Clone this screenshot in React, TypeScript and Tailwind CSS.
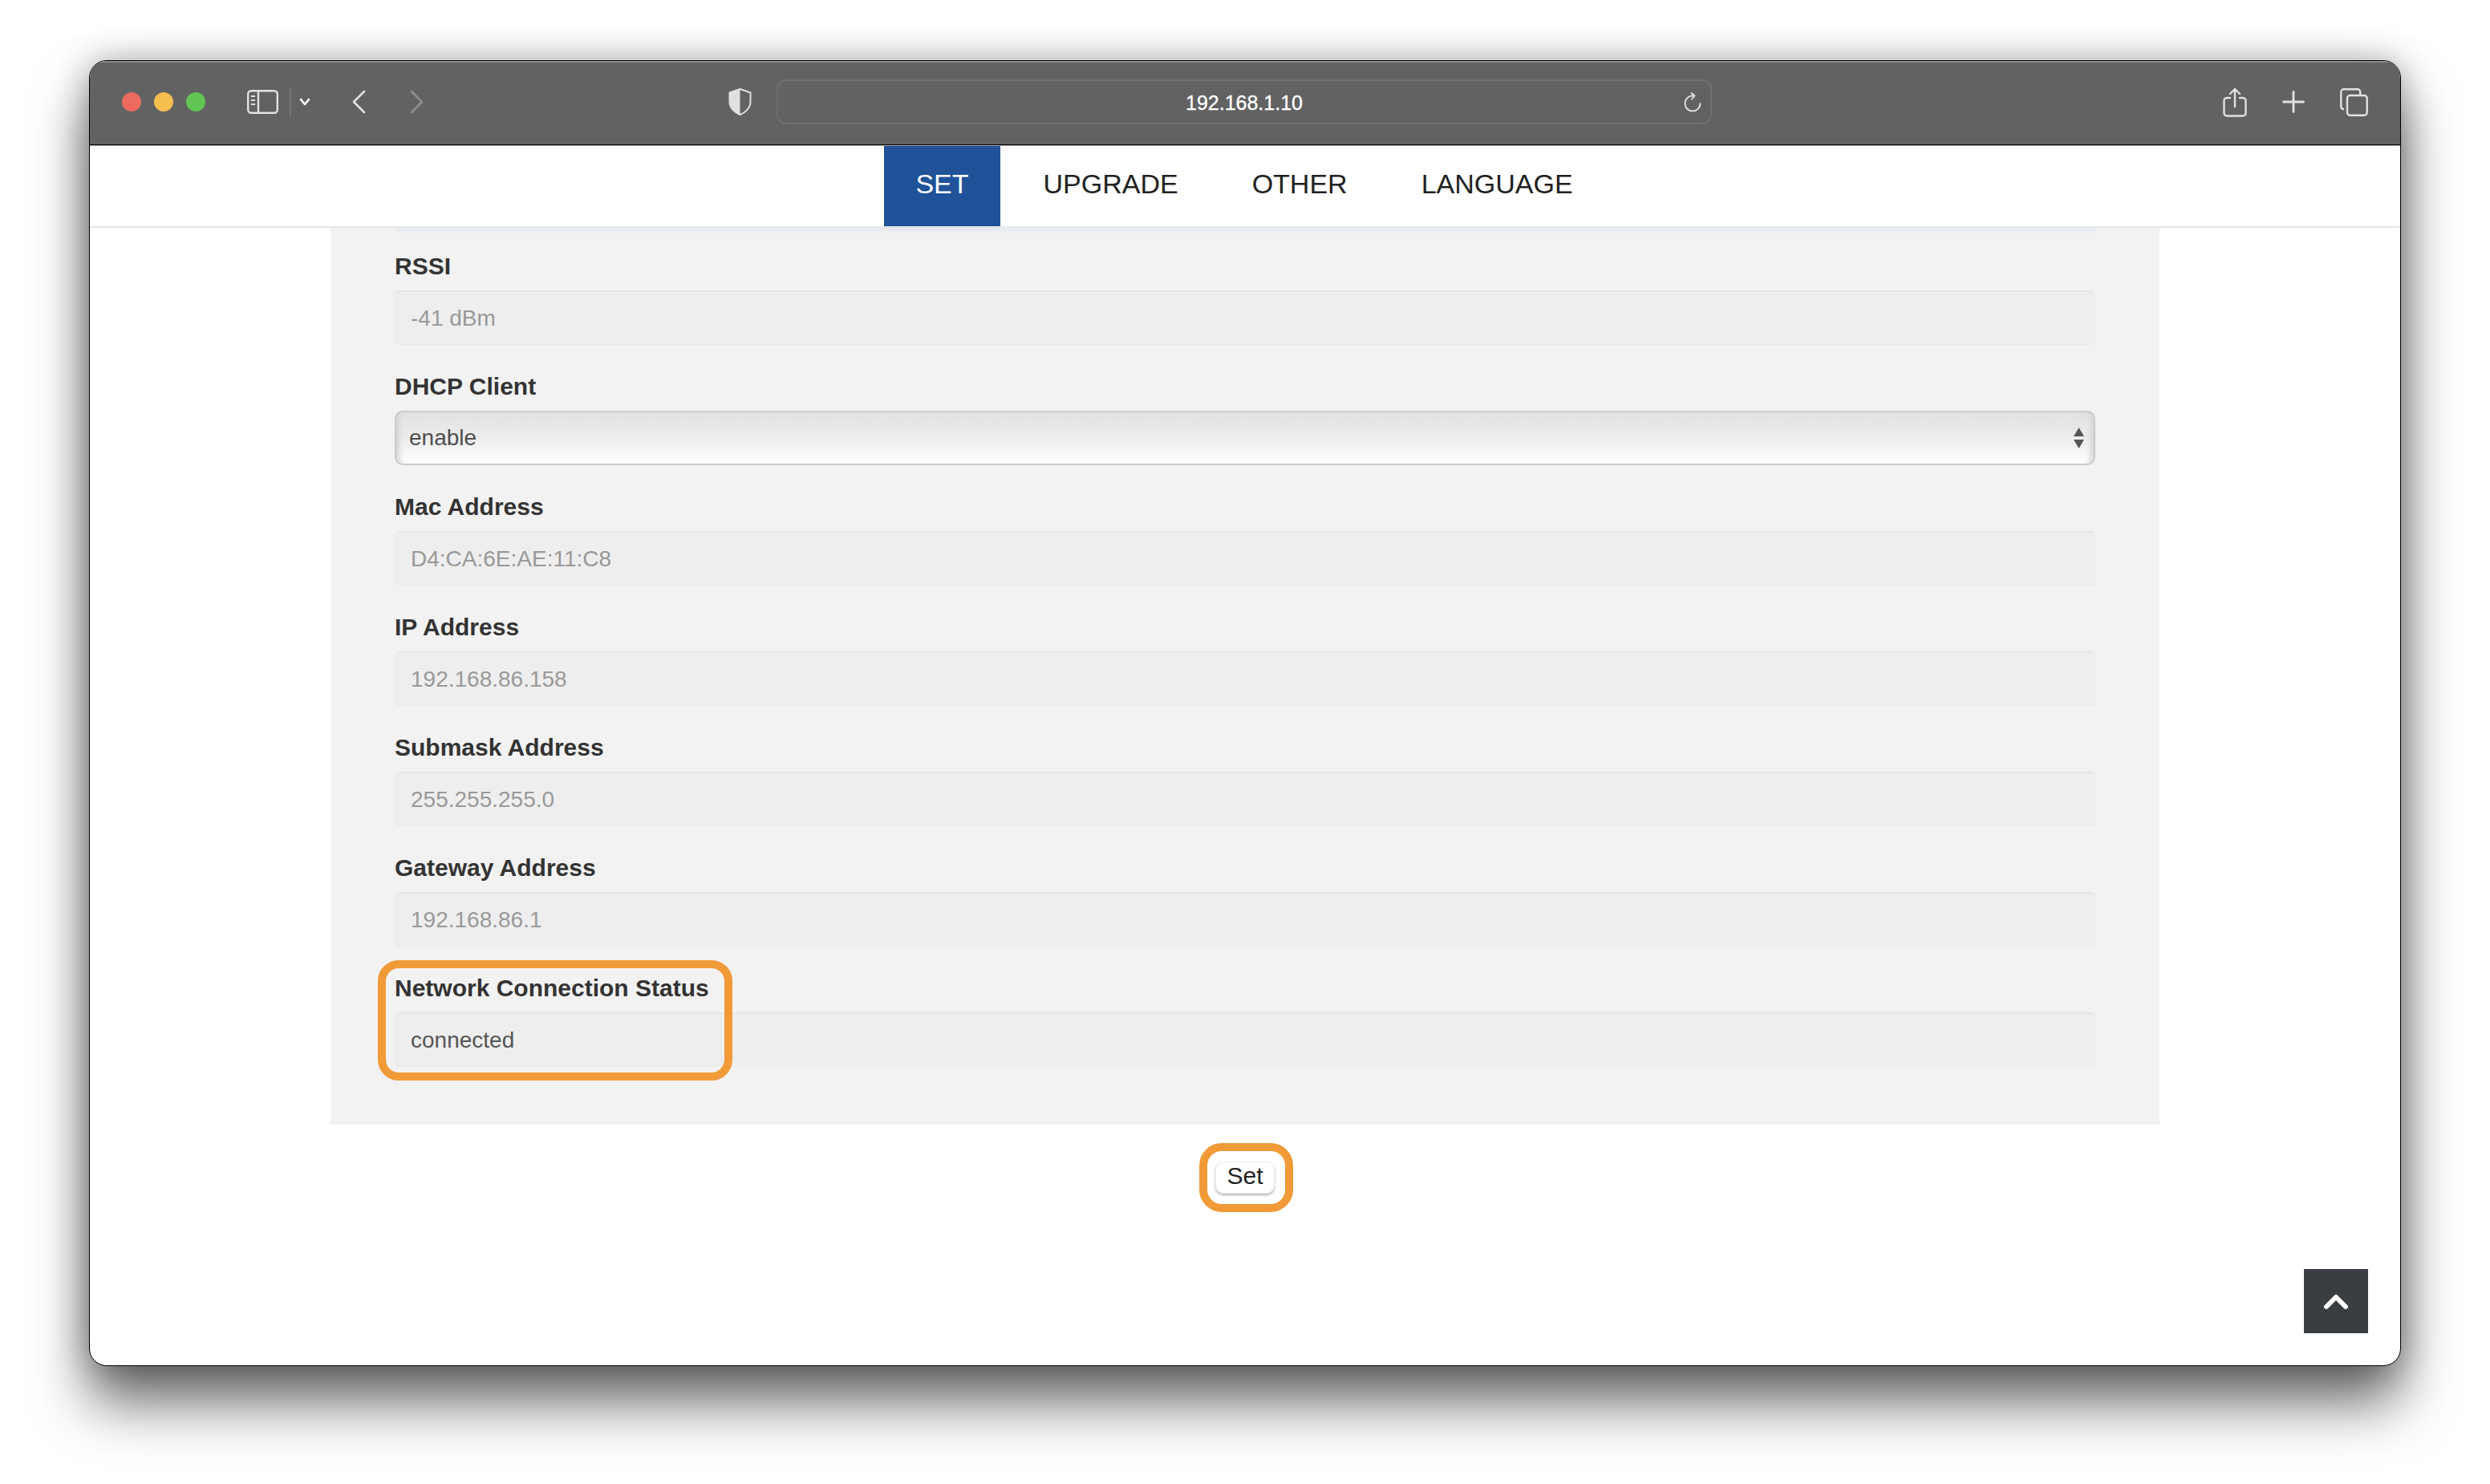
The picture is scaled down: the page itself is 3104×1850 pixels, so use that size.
const fields = [
  { label: 'RSSI', value: '-41 dBm' },
  { label: 'DHCP Client', value: 'enable', select: true },
  { label: 'Mac Address', value: 'D4:CA:6E:AE:11:C8' },
  { label: 'IP Address', value: '192.168.86.158' },
  { label: 'Submask Address', value: '255.255.255.0' },
  { label: 'Gateway Address', value: '192.168.86.1' },
  { label: 'Network Connection Status', value: 'connected', active: true },
];

function Toolbar() {
  return (
    <div className="flex h-[105px] flex-none items-center border-b border-b-black bg-[#626262] pb-[2px] pl-[40px] shadow-[inset_0_2px_0_#8c8c8c]">
      <div className="flex flex-none gap-4">
        <span className="h-6 w-6 rounded-full bg-[#ec6a5e]" />
        <span className="h-6 w-6 rounded-full bg-[#f4bf4f]" />
        <span className="h-6 w-6 rounded-full bg-[#61c554]" />
      </div>

      {/* sidebar toggle */}
      <svg className="ml-[52px] flex-none" width="39" height="30" viewBox="0 0 39 30" fill="none" stroke="#e2e2e2" strokeWidth="2.4">
        <rect x="1.2" y="1.2" width="36.6" height="27.6" rx="4" />
        <path d="M14 1v28" />
        <path d="M5 8h5M5 13h5M5 18h5" strokeWidth="2" />
      </svg>
      <div className="ml-[14px] h-9 w-[2px] flex-none bg-[#747474]" />
      <svg className="ml-[10px] flex-none" width="14" height="10" viewBox="0 0 14 10" fill="none" stroke="#ffffff" strokeWidth="2.6" strokeLinecap="round" strokeLinejoin="round">
        <path d="M2 2l5 6 5-6" />
      </svg>

      <svg className="ml-[52px] flex-none" width="17" height="30" viewBox="0 0 17 30" fill="none" stroke="#e0e0e0" strokeWidth="2.6" strokeLinecap="round" strokeLinejoin="round">
        <path d="M15 2L2 15l13 13" />
      </svg>
      <svg className="ml-[55px] flex-none" width="17" height="30" viewBox="0 0 17 30" fill="none" stroke="#8f8f8f" strokeWidth="2.6" strokeLinecap="round" strokeLinejoin="round">
        <path d="M2 2l13 13L2 28" />
      </svg>

      {/* privacy shield */}
      <svg className="ml-[380px] flex-none" width="29" height="34" viewBox="0 0 29 34">
        <path d="M14.5 1L27.5 5.500V17C27.500 24.500 21 30.500 14.500 33C8 30.500 1.500 24.500 1.500 17V5.500Z" fill="none" stroke="#e0e0e0" strokeWidth="2" strokeLinejoin="round" />
        <path d="M14.500 1L1.500 5.500V17C1.500 24.500 8 30.500 14.500 33Z" fill="#e0e0e0" />
      </svg>

      <div className="relative ml-[31px] flex h-[56px] w-[1166px] flex-none items-center justify-center rounded-xl border-2 border-[#6f6f6f] pt-[3px] text-[25px] text-white [-webkit-text-stroke:0.3px_#ffffff]">
        192.168.1.10
        <svg className="absolute right-[10px] top-[14px]" width="24" height="25" viewBox="0 0 24 25" fill="none" stroke="#e6e6e6" strokeWidth="1.800" strokeLinecap="round" strokeLinejoin="round">
          <path d="M13 4.500A9.500 9.500 0 1 0 21.500 14" />
          <path d="M10.500 1l4 3.500-3.500 4" />
        </svg>
      </div>

      {/* share */}
      <svg className="ml-[637px] flex-none" width="30" height="37" viewBox="0 0 30 37" fill="none" stroke="#e2e2e2" strokeWidth="2.4" strokeLinecap="round" strokeLinejoin="round">
        <path d="M9 13H5a3.500 3.500 0 0 0-3.500 3.500V32A3.500 3.500 0 0 0 5 35.500h20a3.500 3.500 0 0 0 3.500-3.500V16.500A3.500 3.500 0 0 0 25 13h-4" />
        <path d="M15 24V2M9 8l6-6 6 6" />
      </svg>
      <svg className="ml-[44px] flex-none" width="28" height="28" viewBox="0 0 28 28" fill="none" stroke="#e2e2e2" strokeWidth="2.800" strokeLinecap="round">
        <path d="M14 1.500v25M1.500 14h25" />
      </svg>
      {/* tabs */}
      <svg className="ml-[44px] flex-none" width="35" height="35" viewBox="0 0 35 35" fill="none" stroke="#e2e2e2" strokeWidth="2.400">
        <path d="M5 26H4.500A3.200 3.200 0 0 1 1.300 22.800V4.500A3.200 3.200 0 0 1 4.500 1.300H22A3.200 3.200 0 0 1 25.200 4.500V9" />
        <rect x="9" y="9" width="24.700" height="24.700" rx="3.500" />
      </svg>
    </div>
  );
}

function Nav() {
  return (
    <div className="flex h-[103px] flex-none justify-center border-b-2 border-t border-b-[#e7e7e7] border-t-[#a8a8a8] bg-white text-[34px] text-[#222222]">
      <div className="ml-[5px] flex">
        <div className="flex h-[100px] items-center bg-[#1f5299] px-[39px] pb-[6px] text-white">SET</div>
        <div className="flex h-[100px] items-center pb-[6px] pl-[54px] pr-[46px]">UPGRADE</div>
        <div className="flex h-[100px] items-center px-[46px] pb-[6px]">OTHER</div>
        <div className="flex h-[100px] items-center px-[46px] pb-[6px]">LANGUAGE</div>
      </div>
    </div>
  );
}

function Field({ label, value, select, active }: { label: string; value: string; select?: boolean; active?: boolean }) {
  return (
    <div>
      <div className="mb-[10px] text-[30px] font-bold leading-[40px] text-[#333333]">{label}</div>
      {select ? (
        <div className="flex h-[68px] items-center justify-between rounded-[10px] border-2 border-[#cbcbcb] bg-gradient-to-b from-[#e2e2e2] via-[#ececec] to-white pl-[16px] pr-[12px] text-[#4f4f4f] shadow-[inset_8px_0_6px_-4px_#d4d4d4,inset_-8px_0_6px_-4px_#d4d4d4]">
          {value}
          <svg width="13" height="26" viewBox="0 0 13 26" fill="#555555">
            <path d="M6.500 0L13 11H0zM0 15h13L6.500 26z" />
          </svg>
        </div>
      ) : (
        <div className={`flex h-[68px] items-center rounded-[6px] border-2 border-[#ebebeb] border-t-[#e6e6e6] bg-[#eeeeee] pl-[18px] pt-[2px] ${active ? 'text-[#555555]' : 'text-[#999999]'}`}>
          {value}
        </div>
      )}
    </div>
  );
}

export default function App() {
  return (
    <div className="h-[1850px] w-[3104px] overflow-hidden bg-white pl-[111px] pt-[75px] font-['Liberation_Sans',Arial,sans-serif] text-[28px]">
      <div className="relative flex h-[1628px] w-[2882px] flex-col overflow-hidden rounded-[22px] border border-black bg-white shadow-[0_46px_70px_rgba(0,0,0,0.58),0_0_44px_rgba(0,0,0,0.3)]">
        <Toolbar />
        <Nav />

        <div className="flex flex-col items-center">
          <div className="relative flex w-[2280px] flex-col gap-8 bg-[#f2f2f2] px-[80px] pb-[72px] pt-[28px]">
            {/* soft edge the nav casts on the form */}
            <div className="absolute left-[80px] right-[80px] top-0 h-[8px] bg-gradient-to-b from-[#e3e9f1] to-[#f2f2f2]" />
            {fields.map((f) => (
              <Field key={f.label} {...f} />
            ))}
          </div>

          <button className="mt-[46px] flex h-[40px] w-[74px] items-center justify-center rounded-[10px] border border-[#eeeeee] bg-white pb-[5px] text-[30px] text-[#222222] shadow-[0_2px_3px_rgba(0,0,0,0.3)]">
            Set
          </button>
        </div>

        {/* orange call-outs */}
        <div className="absolute left-[359px] top-[1121px] h-[150px] w-[442px] rounded-[26px] border-[10px] border-[#f19a38]" />
        <div className="absolute left-[1383px] top-[1349px] h-[86px] w-[117px] rounded-[28px] border-[10px] border-[#f19a38]" />

        <div className="absolute bottom-[40px] left-[2760px] flex h-[80px] w-[80px] items-center justify-center bg-[#3a3d42]">
          <svg width="32" height="22" viewBox="0 0 32 22" fill="none" stroke="#ffffff" strokeWidth="6" strokeLinecap="round" strokeLinejoin="round">
            <path d="M4 18L16 6l12 12" />
          </svg>
        </div>
      </div>
    </div>
  );
}
